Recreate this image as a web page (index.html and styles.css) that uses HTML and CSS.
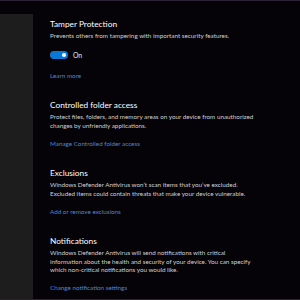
FILE: index.html
```html
<!DOCTYPE html>
<html>
<head>
<meta charset="utf-8">
<link rel="stylesheet" href="styles.css">
</head>
<body>
<div class="frame">
  <aside class="nav"></aside>
  <main class="content">
    <section class="sec first">
      <h2 class="title">Tamper Protection</h2>
      <p class="desc">Prevents others from tampering with important security features.</p>
      <div class="toggle-row">
        <span class="toggle"><span class="knob"></span></span>
        <span class="toggle-label">On</span>
      </div>
      <a class="link">Learn more</a>
    </section>
    <section class="sec">
      <h2 class="title">Controlled folder access</h2>
      <p class="desc">Protect files, folders, and memory areas on your device from unauthorized<br>changes by unfriendly applications.</p>
      <a class="link">Manage Controlled folder access</a>
    </section>
    <section class="sec">
      <h2 class="title">Exclusions</h2>
      <p class="desc">Windows Defender Antivirus won’t scan items that you’ve excluded.<br>Excluded items could contain threats that make your device vulnerable.</p>
      <a class="link">Add or remove exclusions</a>
    </section>
    <section class="sec">
      <h2 class="title">Notifications</h2>
      <p class="desc">Windows Defender Antivirus will send notifications with critical<br>information about the health and security of your device. You can specify<br>which non-critical notifications you would like.</p>
      <a class="link">Change notification settings</a>
    </section>
  </main>
</div>
</body>
</html>
```

FILE: styles.css
```css
html, body {
  margin: 0;
  padding: 0;
  background: #050308;
}
body {
  width: 300px;
  height: 300px;
  overflow: hidden;
  font-family: Lato, "Open Sans", sans-serif;
  border-top: 1px solid #2b2236;
  border-bottom: 1px solid #2b2236;
  box-sizing: border-box;
}
.frame {
  display: flex;
  height: 298px;
}
.nav {
  width: 33px;
  margin-top: 13px;
  background: #1d1d1d;
  flex: none;
}
.content {
  padding-left: 17px;
  padding-top: 16px;
}
.sec {
  display: flex;
  flex-direction: column;
  align-items: flex-start;
  margin-bottom: 18.5px;
}
.title {
  margin: 0;
  font-weight: 400;
  font-size: 8.3px;
  line-height: 14px;
  color: #ffffff;
}
.desc {
  margin: 0;
  margin-top: 1px;
  font-size: 6.3px;
  line-height: 8.7px;
  color: #d0d0d0;
}
.toggle-row {
  display: flex;
  align-items: center;
  gap: 5px;
  margin-top: 10px;
  margin-bottom: 12px;
}
.toggle {
  width: 18px;
  height: 8px;
  border-radius: 4px;
  background: #0a78d7;
  display: flex;
  justify-content: flex-end;
  align-items: center;
  padding-right: 2px;
  box-sizing: border-box;
}
.knob {
  width: 4px;
  height: 4px;
  border-radius: 50%;
  background: #fff;
}
.toggle-label {
  font-size: 6.8px;
  color: #e8e8e8;
}
.link {
  font-size: 6.3px;
  line-height: 9px;
  color: #4f86cf;
  margin-top: 8px;
}
.first .link {
  margin-top: 0;
}
```
